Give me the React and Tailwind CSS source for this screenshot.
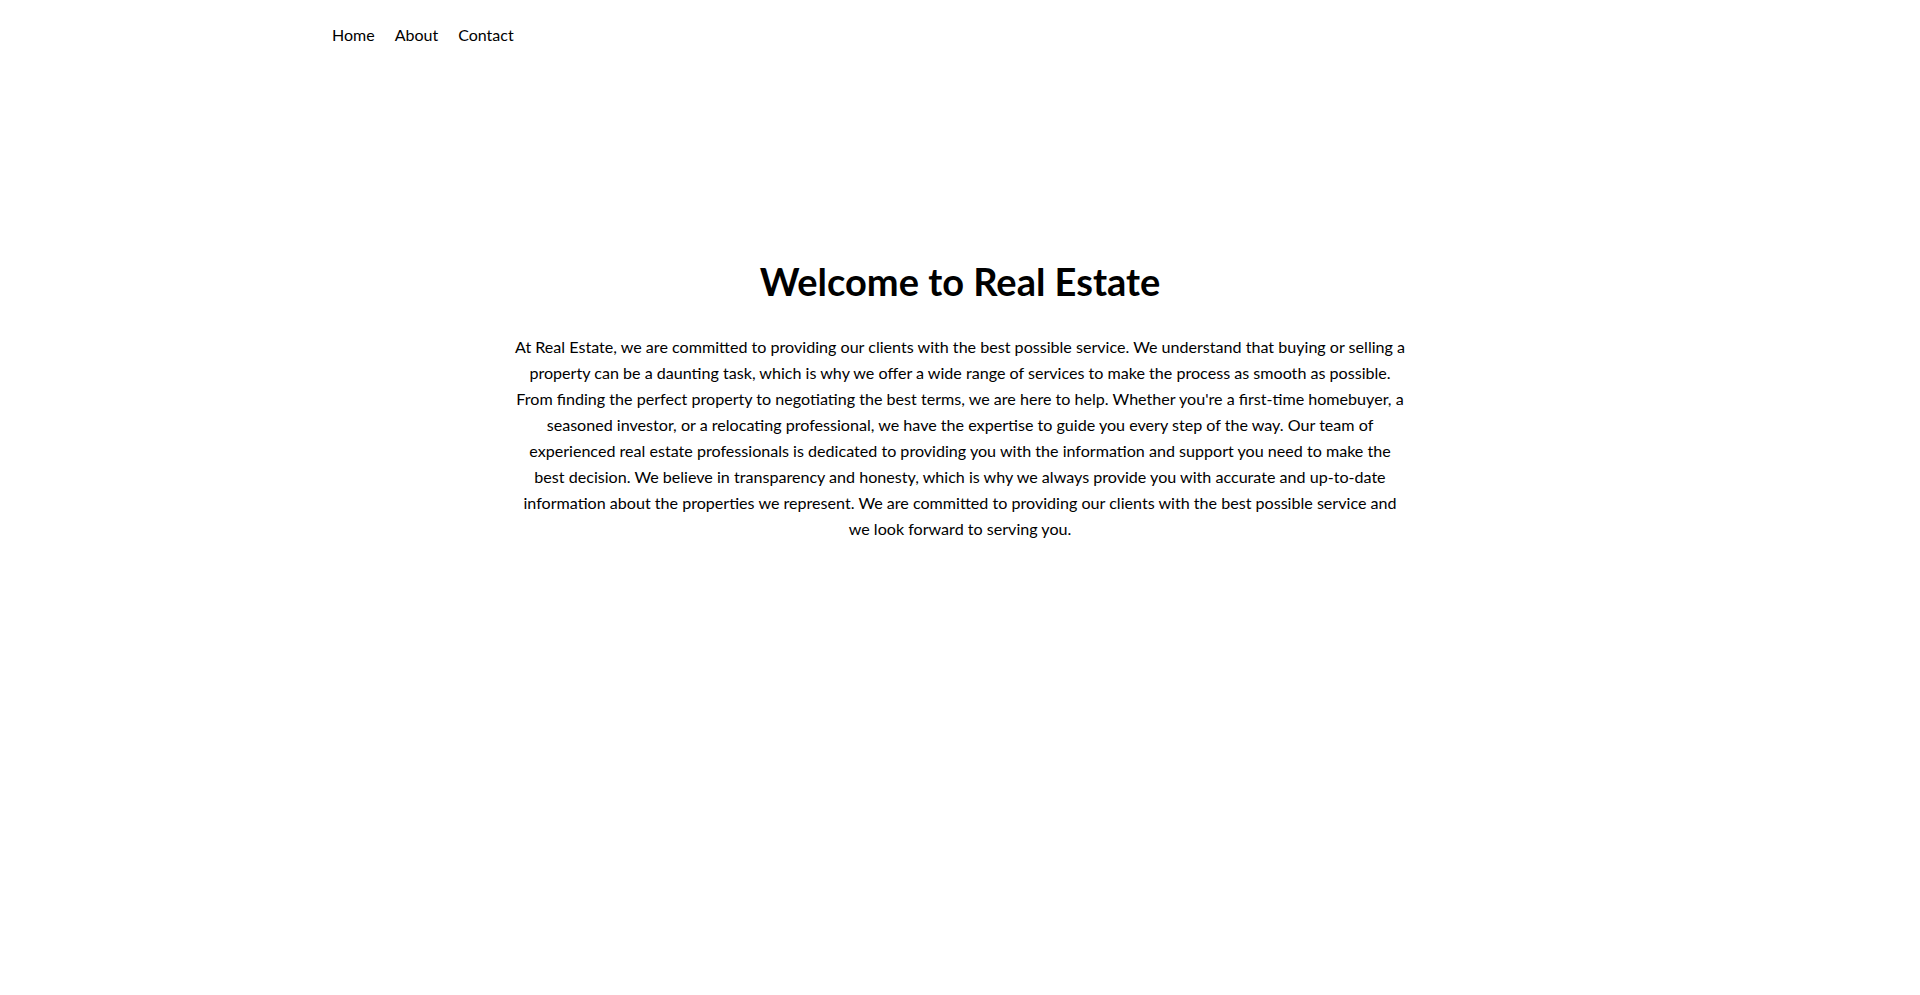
import React from 'react';

const links = ['Home', 'About', 'Contact'];

const lines = [
  'At Real Estate, we are committed to providing our clients with the best possible service. We understand that buying or selling a',
  'property can be a daunting task, which is why we offer a wide range of services to make the process as smooth as possible.',
  "From finding the perfect property to negotiating the best terms, we are here to help. Whether you're a first-time homebuyer, a",
  'seasoned investor, or a relocating professional, we have the expertise to guide you every step of the way. Our team of',
  'experienced real estate professionals is dedicated to providing you with the information and support you need to make the',
  'best decision. We believe in transparency and honesty, which is why we always provide you with accurate and up-to-date',
  'information about the properties we represent. We are committed to providing our clients with the best possible service and',
  'we look forward to serving you.',
];

const App = () => {
  return (
    <div className="min-h-screen bg-white text-black font-['Segoe_UI','Lato','Open_Sans',sans-serif]">
      <header className="mx-auto w-[1256px] pt-[24px]">
        <nav className="flex gap-[20px] text-[16px] leading-[22px]">
          {links.map((link) => (
            <a key={link} href="#" className="text-black">
              {link}
            </a>
          ))}
        </nav>
      </header>

      <main className="mx-auto w-[900px] pt-[211px] text-center">
        <h1 className="text-[38px] font-bold leading-[48px]">Welcome to Real Estate</h1>
        <p className="mt-[29px] text-[16.1px] leading-[26px]">
          {lines.map((line, i) => (
            <React.Fragment key={i}>
              {line}
              {i < lines.length - 1 && <br />}
            </React.Fragment>
          ))}
        </p>
      </main>
    </div>
  );
};

export default App;
